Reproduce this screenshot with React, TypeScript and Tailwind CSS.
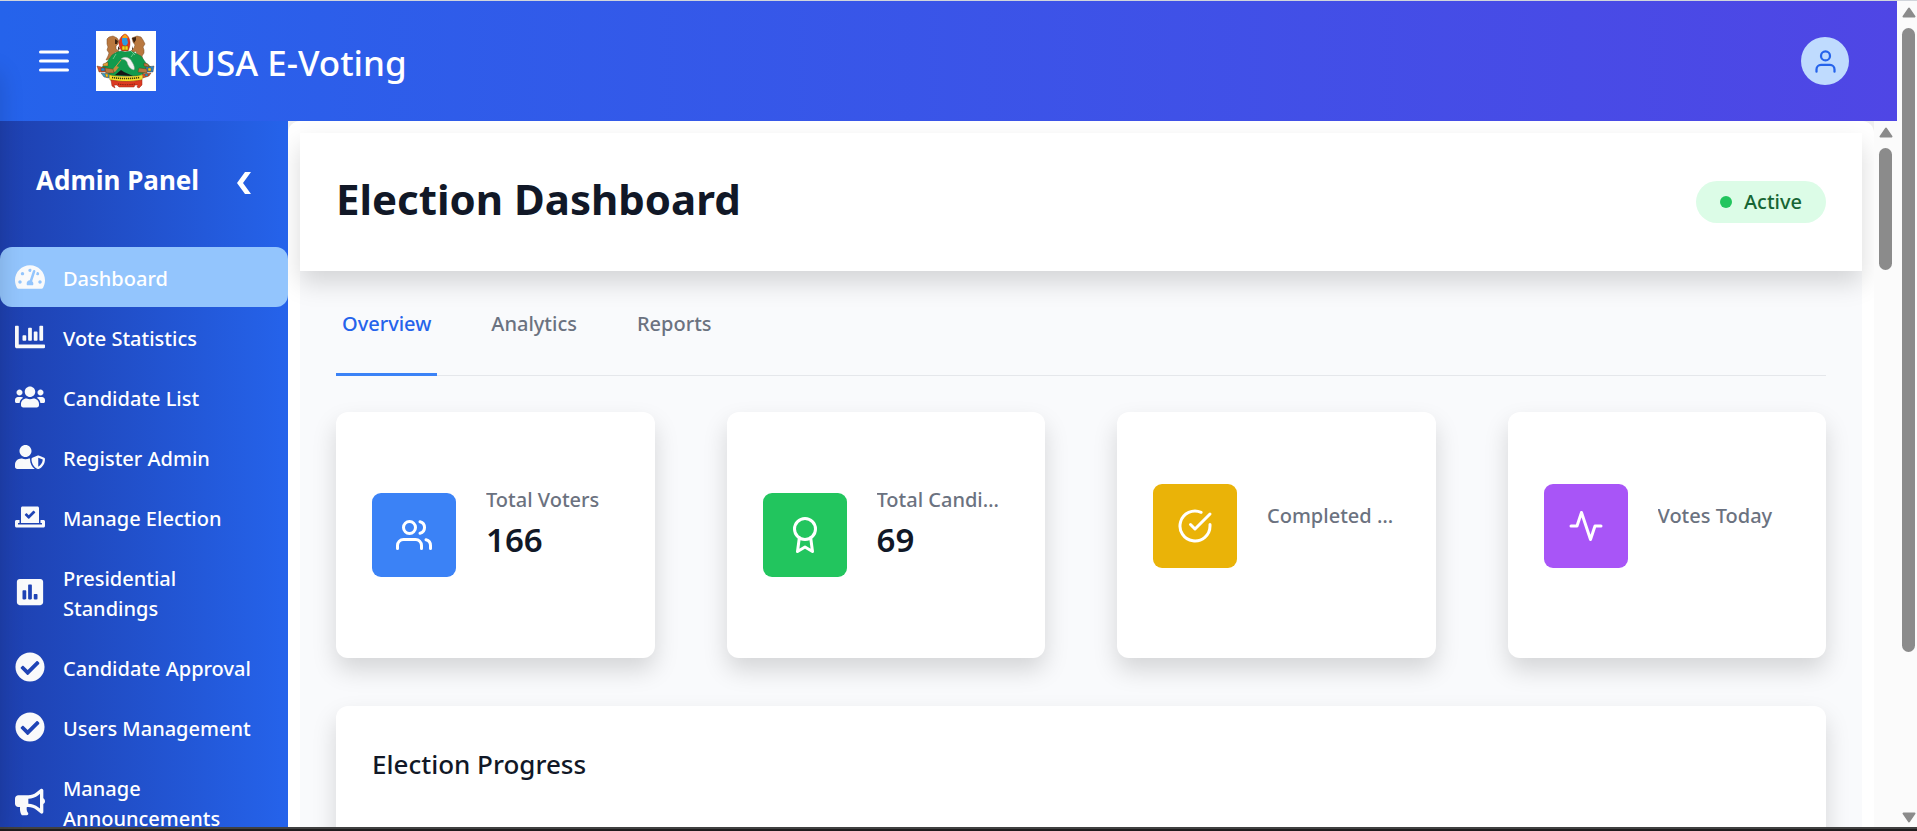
import type { ComponentType, ReactNode } from "react";
import {
  FaBullhorn,
  FaChartBar,
  FaCheckCircle,
  FaPoll,
  FaTachometerAlt,
  FaUserShield,
  FaUsers,
  FaVoteYea,
} from "react-icons/fa";
import { FiActivity, FiAward, FiCheckCircle, FiUser, FiUsers } from "react-icons/fi";

type Icon = ComponentType<{ className?: string }>;

const navItems: { label: string; icon: Icon; active?: boolean }[] = [
  { label: "Dashboard", icon: FaTachometerAlt, active: true },
  { label: "Vote Statistics", icon: FaChartBar },
  { label: "Candidate List", icon: FaUsers },
  { label: "Register Admin", icon: FaUserShield },
  { label: "Manage Election", icon: FaVoteYea },
  { label: "Presidential Standings", icon: FaPoll },
  { label: "Candidate Approval", icon: FaCheckCircle },
  { label: "Users Management", icon: FaCheckCircle },
  { label: "Manage Announcements", icon: FaBullhorn },
];

const stats: { label: string; value?: string; icon: Icon; color: string }[] = [
  { label: "Total Voters", value: "166", icon: FiUsers, color: "bg-[#3b82f6]" },
  { label: "Total Candidates", value: "69", icon: FiAward, color: "bg-[#22c55e]" },
  { label: "Completed Elections", icon: FiCheckCircle, color: "bg-[#eab308]" },
  { label: "Votes Today", icon: FiActivity, color: "bg-[#a855f7]" },
];

const tabs = ["Overview", "Analytics", "Reports"];

function Crest() {
  return (
    <svg viewBox="0 0 60 60" className="size-[60px] shrink-0 bg-white" role="img" aria-label="KUSA crest">
      <g fill="#b9783f" stroke="#7a4a20" strokeWidth=".5">
        <path d="M11 8l2-2 4-1 4 2 2 3-1 3-2 2 0 3 3 2-1 2-3-1-1 4-3 1-1 2-4 1 2-4 1-3-2-3 1-3-1-3z" />
        <path d="M47 9l-2-3-4-1-5 2 1 4 2 3-1 3-3 3 1 2 4-2 1 4 2 3 4 2-1-4 2-3 0-3-1-3 2-3z" />
      </g>
      <path d="M19 8l3 2-1 3-2 0zM40 6l-4 1 2 5 2-3zM22 15l2 3-2 1zM37 15l-1 3 1 1z" fill="#3a2211" />
      <path d="M29 3c3 1 5 5 5 9 0 3-1 6-2 8h-6c-2-2-3-5-3-8 0-4 3-8 6-9z" fill="#e5331d" stroke="#9c2413" strokeWidth=".5" />
      <path d="M26 6l3-3 3 3-1 2h-4z" fill="#f6a51a" />
      <path d="M26 7h5l1 5-2 3-3-1-1-3z" fill="#2d9be0" />
      <path d="M26 15h6v4h-6z" fill="#f7d51d" stroke="#8a5a0a" strokeWidth=".5" />
      <path d="M29 15v4" stroke="#8a5a0a" strokeWidth=".6" />
      <path d="M6 36l5-5 5-7 5-3 4-1 4 1 6-1 4 2 6 3 5 7 5 4-4 5-9 4H16l-8-5z" fill="#129a4d" stroke="#0a7a3b" strokeWidth=".4" />
      <path d="M35 20l4 4M38 22l-3 4M20 23l-3 5" stroke="#7cd09c" strokeWidth=".8" />
      <path d="M25 28c3-3 9-2 11 3 2 3 3 6 2 8-4-1-6-4-7-8-1-2-3-3-6-3z" fill="#f2f4f2" stroke="#9aa79d" strokeWidth=".5" />
      <path d="M17 39l8-10" stroke="#d39a45" strokeWidth="1" />
      <path d="M16 40l4-5 3 1-4 5z" fill="#c98a3c" />
      <path d="M19 44l6-5 3 2 9 4z" fill="#171717" />
      <g stroke="#5c3413" strokeWidth=".4">
        <path d="M1 35l9 2 1 4-8 0z" fill="#d9512b" />
        <path d="M5 37l4 0 0 3-4 0z" fill="#2c86c8" />
        <path d="M9 37l8 1 1 4-8 0z" fill="#b9783f" />
        <path d="M5 42l9 1-1 4-5-1z" fill="#2f9ed0" />
        <path d="M9 43l3 0 0 3-2 0z" fill="#f3cb26" />
        <path d="M7 33l5-2 0 4-5 0z" fill="#e0a13a" />
        <path d="M58 35l-8 1-1 5 8 0z" fill="#2c86c8" />
        <path d="M55 37l-3 0 0 3 3 0z" fill="#f3cb26" />
        <path d="M51 38l-8-1-1 4 9 1z" fill="#b9783f" />
        <path d="M55 42l-9 1 1 4 6-2z" fill="#d9512b" />
        <path d="M52 43l-3 0 0 2 3 0z" fill="#2f9ed0" />
        <path d="M48 32l4 1 1 3-5-1z" fill="#b9783f" />
      </g>
      <path d="M13 44c11 2 23 2 34 0l-1 5c-11 2-21 2-32 0z" fill="#f8e02a" stroke="#8a7a10" strokeWidth=".5" />
      <path d="M16 46.500c9 1.400 19 1.400 28 0" stroke="#3b370d" strokeWidth="1.600" strokeDasharray="1.200 .8" fill="none" />
      <path d="M15 49c10 2 20 2 31 0l0 5-3 3-2-1 1-2-3 0-1 2H23l-2-2-3 0 1 3-3-2z" fill="#dc3a22" stroke="#9c2413" strokeWidth=".5" />
      <path d="M22 53c6 1 11 1 17 0" stroke="#7d1d10" strokeWidth="1" strokeDasharray="1 .8" fill="none" />
    </svg>
  );
}

function ScrollArrow({ down = false }: { down?: boolean }) {
  return (
    <svg viewBox="0 0 14 11" className={down ? "h-[11px] w-[14px] rotate-180" : "h-[11px] w-[14px]"} aria-hidden="true">
      <path d="M7 1.500L12.500 9.500H1.500z" fill="#8b8b8b" stroke="#8b8b8b" strokeWidth="2" strokeLinejoin="round" />
    </svg>
  );
}

function Card({ children, className = "" }: { children: ReactNode; className?: string }) {
  return <div className={`rounded-xl bg-white p-9 shadow-[0_12px_24px_rgba(0,0,0,0.15)] ${className}`}>{children}</div>;
}

function Header() {
  return (
    <header className="flex h-[120px] shrink-0 items-center justify-between bg-linear-to-r/srgb from-[#2563eb] to-[#4f46e5] px-12">
      <div className="-ml-[9px] flex items-center">
        <button type="button" aria-label="Toggle menu" className="mr-[27px]">
          <svg viewBox="0 0 30 24" className="h-6 w-[30px]" stroke="#fff" strokeWidth="3" strokeLinecap="round">
            <path d="M1.500 3h27M1.500 12h27M1.500 21h27" />
          </svg>
        </button>
        <Crest />
        <span className="ml-3 pt-1 text-[35px] font-medium text-white">KUSA E-Voting</span>
      </div>
      <button type="button" aria-label="Profile" className="flex size-12 items-center justify-center rounded-full bg-[#bfdbfe]">
        <FiUser className="size-[27px] text-[#2563eb]" />
      </button>
    </header>
  );
}

function Sidebar() {
  return (
    <aside className="w-72 shrink-0 overflow-hidden bg-linear-to-r/srgb from-[#1e40af] to-[#2563eb] text-white">
      <div className="flex h-[126px] items-center justify-between px-9 pb-2">
        <h2 className="text-[26px] font-bold">Admin Panel</h2>
        <button type="button" aria-label="Collapse sidebar" className="pt-1.5">
          <svg viewBox="0 0 16 24" className="h-6 w-4" fill="#fff">
            <path d="M9 1h6L7 12l8 11H9L1 12z" />
          </svg>
        </button>
      </div>
      <nav>
        {navItems.map(({ label, icon: NavIcon, active }) => (
          <a
            key={label}
            href="#"
            className={`flex items-center gap-[18px] rounded-xl px-[15px] py-3 text-[20px] leading-[30px] font-medium ${
              active ? "bg-[#93c5fd]" : ""
            }`}
          >
            <NavIcon className="size-[30px] shrink-0 text-[#f9fafb]" />
            <span className="pt-[5px] pb-px">{label}</span>
          </a>
        ))}
      </nav>
    </aside>
  );
}

function Dashboard() {
  return (
    <main className="min-w-0 flex-1 overflow-hidden rounded-t-xl bg-white p-3 pb-0">
      <div className="min-h-full bg-[#f9fafc]">
        <div className="flex h-[138px] items-center justify-between bg-white px-9 shadow-[0_12px_24px_rgba(0,0,0,0.15)]">
          <h1 className="pb-2 text-[42px] font-bold text-[#111827]">Election Dashboard</h1>
          <span className="flex items-center gap-3 rounded-full bg-[#dcfce7] px-6 py-1.5 text-[20px] leading-[30px] font-medium text-[#166534]">
            <span className="size-3 rounded-full bg-[#22c55e]" />
            <span>Active</span>
          </span>
        </div>

        <div className="px-9">
          <div role="tablist" className="flex h-[105px] gap-12 border-b border-[#e5e7eb]">
            {tabs.map((tab, i) => (
              <button
                key={tab}
                type="button"
                role="tab"
                aria-selected={i === 0}
                className={`-mb-px flex border-b-3 px-1.5 pt-[38px] text-[20px] leading-[30px] font-medium ${
                  i === 0 ? "border-[#3b82f6] text-[#2563eb]" : "border-transparent text-[#6b7280]"
                }`}
              >
                {tab}
              </button>
            ))}
          </div>

          <div className="mt-9 grid grid-cols-4 gap-[72px]">
            {stats.map(({ label, value, icon: StatIcon, color }) => (
              <Card key={label} className={`flex h-[246px] items-center gap-[30px] ${value ? "" : "pb-[54px]"}`}>
                <div className={`flex size-[84px] shrink-0 items-center justify-center rounded-[9px] text-white ${color}`}>
                  <StatIcon className="size-9" />
                </div>
                <dl className="min-w-0 flex-1 pb-5">
                  <dt className="truncate text-[20px] leading-[30px] font-medium text-[#6b7280]">{label}</dt>
                  {value && <dd className="text-[33px] leading-[50px] font-semibold text-[#111827]">{value}</dd>}
                </dl>
              </Card>
            ))}
          </div>

          <Card className="mt-12 min-h-[180px]">
            <h2 className="text-[26px] leading-[45px] font-medium text-[#111827]">Election Progress</h2>
          </Card>
        </div>
      </div>
    </main>
  );
}

export default function App() {
  return (
    <div className="relative flex h-screen flex-col overflow-hidden border-t border-[#d1d5db] font-['Noto_Sans','Open_Sans',sans-serif]">
      <div className="flex min-h-0 flex-1">
        <div className="flex min-w-0 flex-1 flex-col">
          <Header />
          <div className="flex min-h-0 flex-1 bg-[#efefef]">
            <Sidebar />
            <Dashboard />
            <div className="flex w-[23px] shrink-0 flex-col items-center bg-[#fbfbfb] pt-1.5" aria-hidden="true">
              <ScrollArrow />
              <div className="mt-2.5 h-[122px] w-[13px] rounded-full bg-[#8b8b8b]" />
            </div>
          </div>
        </div>
        <div className="flex w-5 shrink-0 flex-col items-center bg-[#fbfbfb] pt-1.5 pb-1 pl-[3px]" aria-hidden="true">
          <ScrollArrow />
          <div className="mt-2.5 mb-1 min-h-0 w-[13px] flex-1">
            <div className="h-4/5 rounded-full bg-[#8b8b8b]" />
          </div>
          <ScrollArrow down />
        </div>
      </div>
      <div className="h-1 shrink-0 border-t-2 border-[#414141] bg-[#1f1c1d]" />
      <div className="pointer-events-none absolute top-[60px] bottom-1 -left-10 w-10 shadow-[0_12px_24px_rgba(0,0,0,0.15)]" />
    </div>
  );
}
